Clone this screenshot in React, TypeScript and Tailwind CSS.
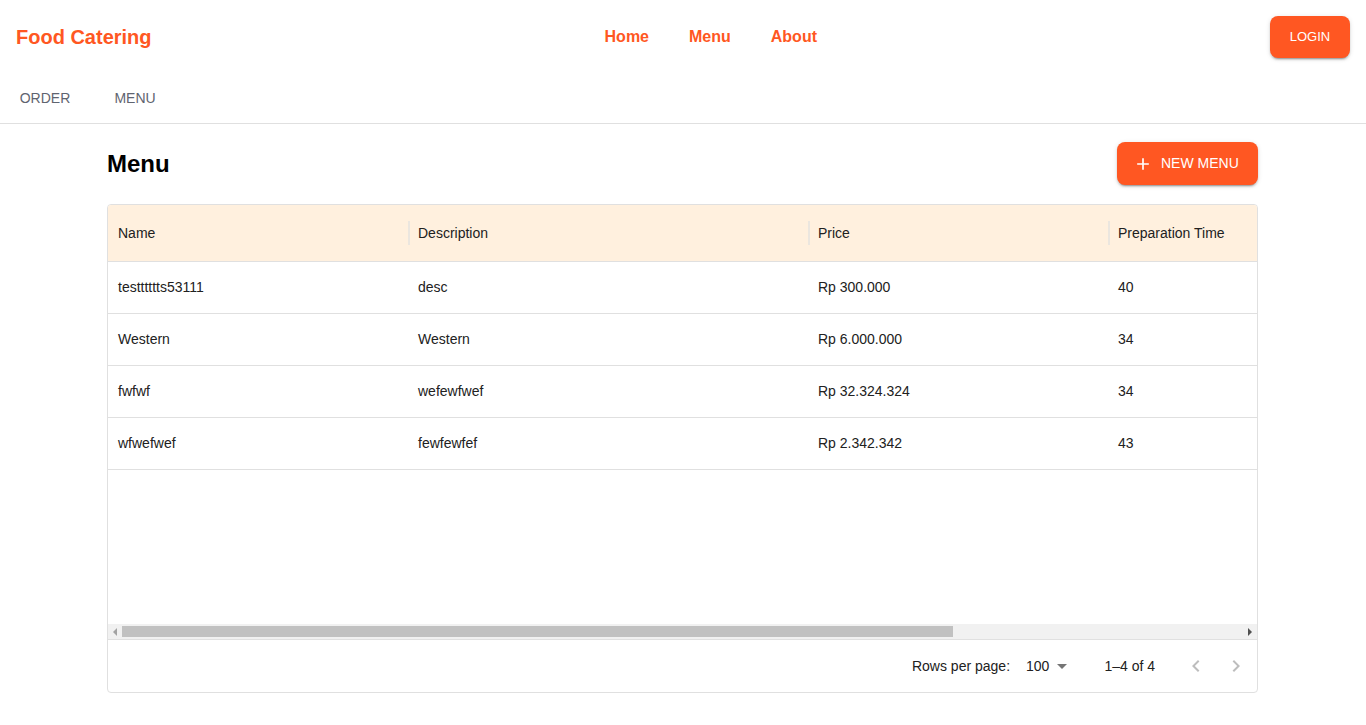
import React from "react";

const rows = [
  { name: "testttttts53111", desc: "desc", price: "Rp 300.000", time: "40" },
  { name: "Western", desc: "Western", price: "Rp 6.000.000", time: "34" },
  { name: "fwfwf", desc: "wefewfwef", price: "Rp 32.324.324", time: "34" },
  { name: "wfwefwef", desc: "fewfewfef", price: "Rp 2.342.342", time: "43" },
];

const cols = [
  { key: "name", label: "Name", w: "w-[300px]" },
  { key: "desc", label: "Description", w: "w-[400px]" },
  { key: "price", label: "Price", w: "w-[300px]" },
  { key: "time", label: "Preparation Time", w: "w-[300px]" },
  { key: "x", label: "", w: "w-[250px]" },
];

export default function App() {
  return (
    <div className="min-h-[725px] bg-white font-['Liberation_Sans',Arial,sans-serif] text-[#212121]">
      {/* Top bar */}
      <header className="flex h-[74px] items-center justify-between px-4">
        <div className="text-[20px] font-bold text-[#ff5722]">Food Catering</div>
        <nav className="flex items-center gap-10 text-[16px] font-bold text-[#ff5722]">
          <span>Home</span>
          <span>Menu</span>
          <span>About</span>
        </nav>
        <button className="flex h-[42px] w-[80px] items-center justify-center rounded-[8px] bg-[#ff5722] text-[13px] uppercase text-white shadow-[0_3px_1px_-2px_rgba(0,0,0,0.2),0_2px_2px_0_rgba(0,0,0,0.14),0_1px_5px_0_rgba(0,0,0,0.12)]">
          Login
        </button>
      </header>

      {/* Tabs */}
      <div className="flex h-[50px] items-start border-b border-[#e0e0e0]">
        <div className="flex h-[48px] w-[90px] items-center justify-center text-[14px] uppercase text-[#5f6470]">Order</div>
        <div className="flex h-[48px] w-[90px] items-center justify-center text-[14px] uppercase text-[#5f6470]">Menu</div>
      </div>

      {/* Main */}
      <main className="mx-auto w-[1152px] pt-[18px]">
        <div className="mb-[19px] flex h-[43px] w-[1151px] items-center justify-between">
          <h1 className="text-[24px] font-bold text-black">Menu</h1>
          <button className="flex h-[43px] w-[141px] items-center gap-2 rounded-[8px] bg-[#ff5722] pl-[16px] text-[14px] uppercase text-white shadow-[0_3px_1px_-2px_rgba(0,0,0,0.2),0_2px_2px_0_rgba(0,0,0,0.14),0_1px_5px_0_rgba(0,0,0,0.12)]">
            <svg width="20" height="20" viewBox="0 0 24 24" fill="currentColor">
              <path d="M19 13h-6v6h-2v-6H5v-2h6V5h2v6h6v2z" />
            </svg>
            <span>New Menu</span>
          </button>
        </div>

        <div className="w-[1151px] overflow-hidden rounded-[4px] border border-[#e0e0e0] text-[14px]">
          <div className="h-[419px] overflow-hidden">
            <div className="w-[1550px]">
              {/* header */}
              <div className="flex h-[57px] border-b border-[#e0e0e0] bg-[#fff0de]">
                {cols.map((c, i) => (
                  <div key={c.key} className={`${c.w} flex shrink-0 items-center`}>
                    {i > 0 ? <div className="h-[24px] w-[2px] bg-[#ebe6df]" /> : <div className="w-[2px]" />}
                    <div className="pl-[8px] text-[#212121]">{c.label}</div>
                  </div>
                ))}
              </div>
              {rows.map((r, idx) => (
                <div key={idx} className="flex h-[52px] items-center border-b border-[#e0e0e0]">
                  <div className="w-[300px] shrink-0 pl-[10px]">{r.name}</div>
                  <div className="w-[400px] shrink-0 pl-[10px]">{r.desc}</div>
                  <div className="w-[300px] shrink-0 pl-[10px]">{r.price}</div>
                  <div className="w-[300px] shrink-0 pl-[10px]">{r.time}</div>
                  <div className="w-[250px] shrink-0" />
                </div>
              ))}
            </div>
          </div>

          {/* fake horizontal scrollbar */}
          <div className="flex h-[15px] items-center bg-[#f1f1f1]">
            <div className="flex w-[14px] items-center justify-center">
              <div className="h-0 w-0 border-y-[4px] border-r-[4px] border-y-transparent border-r-[#a3a3a3]" />
            </div>
            <div className="h-[11px] w-[831px] bg-[#c1c1c1]" />
            <div className="flex-1" />
            <div className="flex w-[14px] items-center justify-center">
              <div className="h-0 w-0 border-y-[4px] border-l-[4px] border-y-transparent border-l-[#505050]" />
            </div>
          </div>

          {/* footer */}
          <div className="flex h-[53px] items-center justify-end border-t border-[#e0e0e0] pr-[1px]">
            <span className="text-[14px]">Rows per page:</span>
            <div className="ml-4 mr-[30px] flex items-center">
              <span className="text-[14px]">100</span>
              <svg width="24" height="24" viewBox="0 0 24 24" className="ml-[1px] text-[#757575]" fill="currentColor">
                <path d="M7 10l5 5 5-5z" />
              </svg>
            </div>
            <span className="text-[14px]">1–4 of 4</span>
            <div className="ml-[21px] flex items-center">
              <div className="flex h-[40px] w-[40px] items-center justify-center text-[#bdbdbd]">
                <svg width="24" height="24" viewBox="0 0 24 24" fill="currentColor">
                  <path d="M15.41 7.41 14 6l-6 6 6 6 1.41-1.41L10.83 12z" />
                </svg>
              </div>
              <div className="flex h-[40px] w-[40px] items-center justify-center text-[#bdbdbd]">
                <svg width="24" height="24" viewBox="0 0 24 24" fill="currentColor">
                  <path d="M10 6 8.59 7.41 13.17 12l-4.58 4.59L10 18l6-6z" />
                </svg>
              </div>
            </div>
          </div>
        </div>
      </main>
    </div>
  );
}
